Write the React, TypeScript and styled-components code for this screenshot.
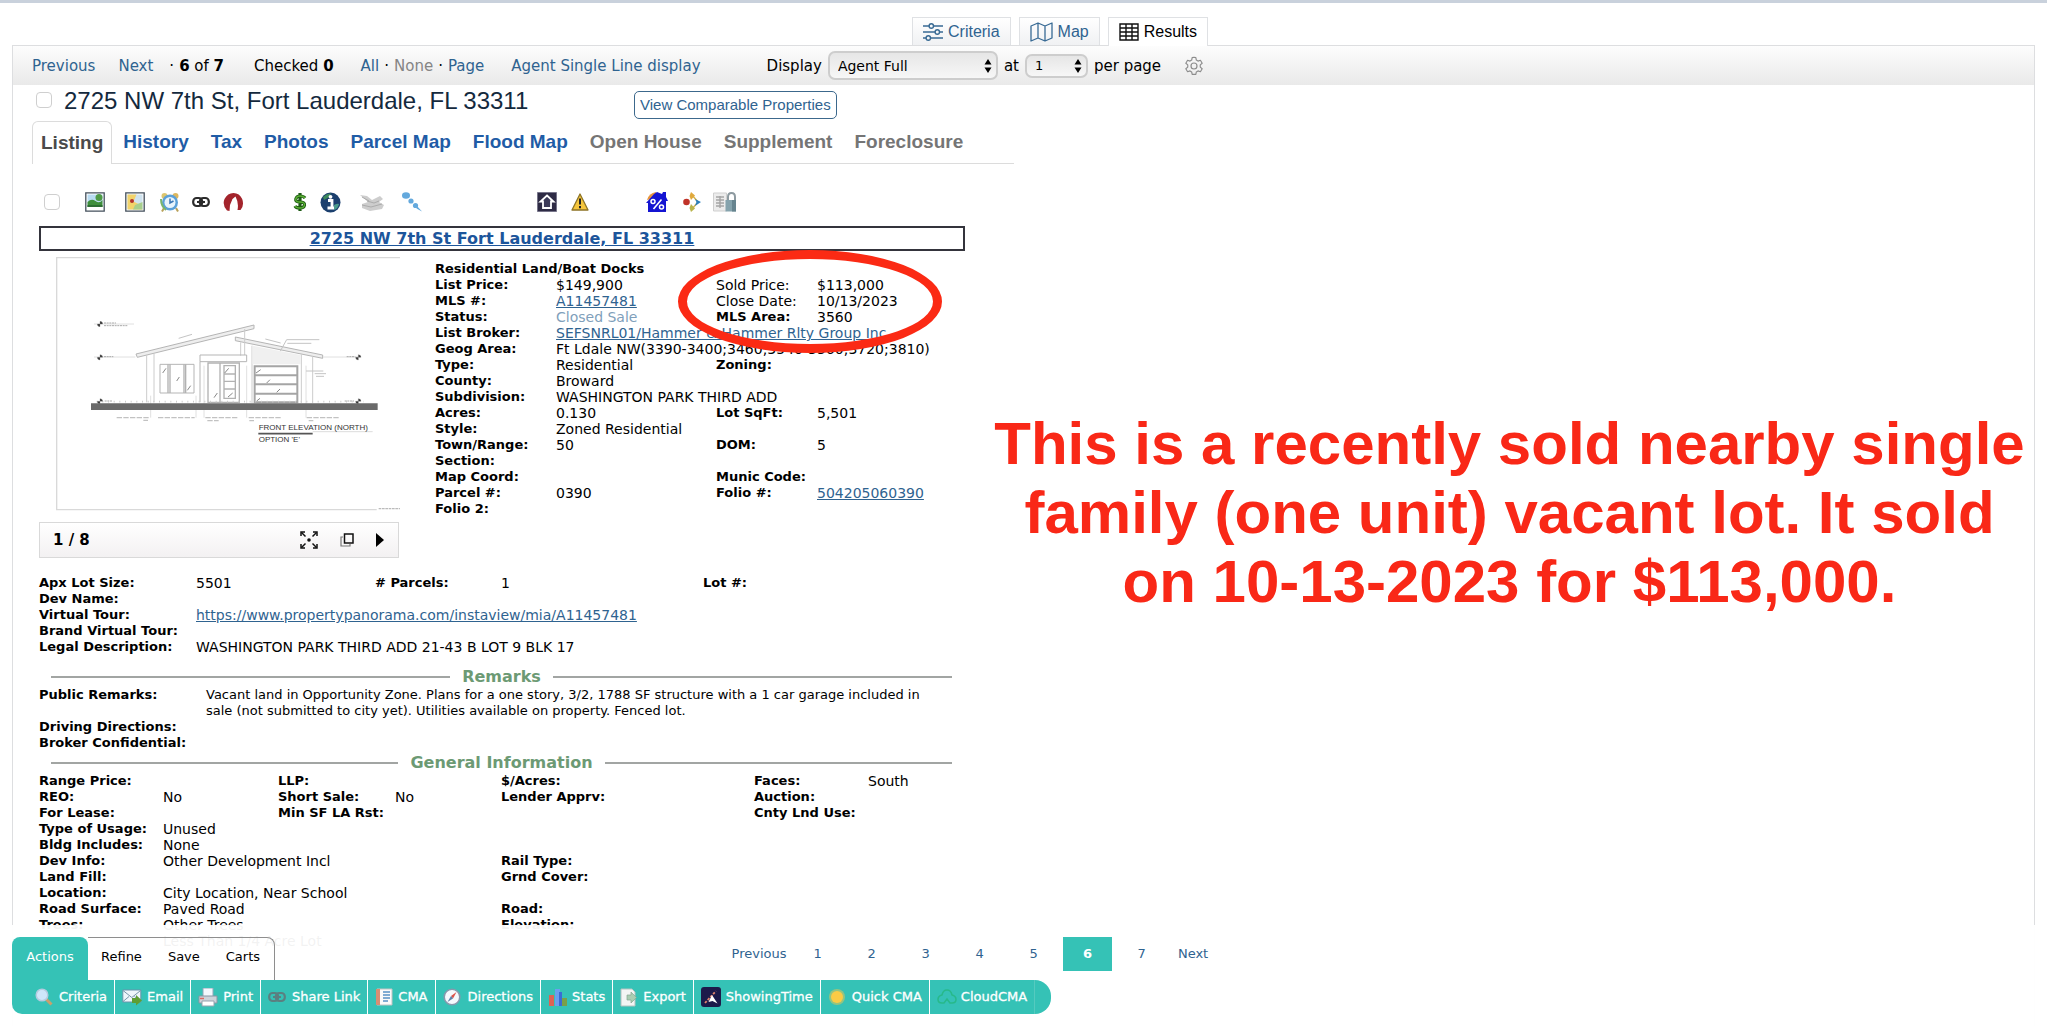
import React from "react";
import styled, { createGlobalStyle, css } from "styled-components";

const sans = `"DejaVu Sans", Verdana, sans-serif`;
const helv = `"Liberation Sans", Arial, Helvetica, sans-serif`;
const teal = "#35c2b6";
const link = "#2f6390";

const Global = createGlobalStyle`
  * { box-sizing: border-box; }
  body { margin: 0; background: #fff; color: #000; font: 13px/16px ${sans}; }
  button, select, input { font: inherit; color: inherit; }
  svg { display: block; flex: none; }
`;

const Page = styled.div`
  height: 100vh;
  overflow: hidden;
  position: relative;
  border-top: 3px solid #c9d1dc;
`;

const ViewTabs = styled.nav`
  height: 42px;
  padding: 14px 0 0 912px;
  display: flex;
  gap: 8px;
`;

const ViewTab = styled.a<{ $active?: boolean }>`
  display: flex;
  align-items: center;
  gap: 5px;
  height: 28px;
  padding: 0 10px;
  border: 1px solid #dfe1e4;
  border-bottom: 0;
  background: linear-gradient(#fff, #f0f1f3);
  color: ${link};
  font: 16px/20px ${helv};
  text-decoration: none;
  ${(p) =>
    p.$active &&
    css`
      height: 29px;
      position: relative;
      background: #fff;
      color: #000;
    `}
`;

const Panel = styled.main`
  margin: 0 12px;
  border: 1px solid #dddee0;
  min-height: 100%;
`;

const Toolbar = styled.div`
  height: 39px;
  padding: 0 19px;
  display: flex;
  align-items: center;
  background: linear-gradient(#fdfdfd, #e9e9e9);
  font-size: 15px;
  white-space: nowrap;
`;

const Group = styled.div<{ $gap?: number; $left?: number }>`
  display: flex;
  align-items: center;
  gap: ${(p) => p.$gap ?? 0}px;
  margin-left: ${(p) => p.$left ?? 0}px;
`;

const PlainLink = styled.a<{ $muted?: boolean }>`
  color: ${(p) => (p.$muted ? "#858585" : link)};
  text-decoration: none;
`;

const SelectBox = styled.div`
  position: relative;
  display: flex;
  align-items: center;
  svg {
    position: absolute;
    right: 6px;
    pointer-events: none;
  }
`;

const Select = styled.select<{ $width: number; $tall?: boolean }>`
  appearance: none;
  width: ${(p) => p.$width}px;
  height: ${(p) => (p.$tall ? 29 : 24)}px;
  padding: 0 8px;
  border: 2px solid #cdcdcd;
  border-radius: 7px;
  background: linear-gradient(#e6e6e6, #f7f7f7);
  font-size: ${(p) => (p.$tall ? 14 : 13)}px;
`;

const IconButton = styled.button`
  display: flex;
  padding: 0;
  border: 0;
  background: none;
`;

const TitleRow = styled.div`
  display: flex;
  align-items: flex-start;
  height: 36px;
  padding-left: 23px;
`;

const Check = styled.input`
  appearance: none;
  width: 16px;
  height: 16px;
  margin: 0;
  border: 1px solid #cfcfcf;
  border-radius: 4px;
  background: #fff;
  flex: none;
  ${TitleRow} & {
    margin-top: 7px;
  }
`;

const Title = styled.h1`
  margin: 0 0 0 12px;
  width: 570px;
  font: 24px/32px ${helv};
  color: #14293d;
`;

const OutlineButton = styled.button`
  height: 28px;
  margin-top: 6px;
  padding: 0 5px;
  border: 1px solid #3c688c;
  border-radius: 5px;
  background: #fff;
  color: ${link};
  font: 15px/20px ${helv};
`;

const RecordTabs = styled.nav`
  display: flex;
  width: 982px;
  height: 43px;
  margin-left: 19px;
  font: bold 19px/42px ${helv};
`;

const RecordTab = styled.a<{ $state?: "active" | "off" }>`
  padding: 0 11px;
  border-bottom: 1px solid #dcdcdc;
  color: ${(p) => (p.$state === "active" ? "#4a4a4a" : p.$state === "off" ? "#757575" : "#1f5ca6")};
  text-decoration: none;
  white-space: nowrap;
  ${(p) =>
    p.$state === "active" &&
    css`
      padding: 0 8px;
      border: 1px solid #dcdcdc;
      border-bottom: 0;
      border-radius: 6px 6px 0 0;
    `}
`;

const TabFill = styled.div`
  flex: 1;
  border-bottom: 1px solid #dcdcdc;
`;

const Columns = styled.div`
  display: flex;
`;

const Sheet = styled.article`
  width: 952px;
  flex: none;
  padding-left: 26px;
`;

const IconRow = styled.div`
  display: flex;
  align-items: center;
  height: 62px;
  padding: 14px 0 0 5px;
`;

const IconSlot = styled.span<{ $left: number }>`
  display: block;
  margin-left: ${(p) => p.$left}px;
`;

const AddressBox = styled.h2`
  margin: 0;
  height: 25px;
  border: 2px solid #34343c;
  text-align: center;
  font: bold 16px/21px ${sans};
  a {
    color: #1c559b;
  }
`;

const Overview = styled.section`
  display: flex;
  position: relative;
  gap: 36px;
  padding-top: 6px;
`;

const Media = styled.div`
  width: 360px;
  flex: none;
`;

const Picture = styled.div`
  padding-left: 17px;
  height: 265px;
`;

const MediaBar = styled.div`
  height: 36px;
  padding: 0 14px 0 13px;
  display: flex;
  align-items: center;
  gap: 22px;
  border: 1px solid #d9d9d9;
  background: linear-gradient(#fff, #f3f1f2);
  font-weight: bold;
  font-size: 15px;
`;

const Count = styled.span`
  flex: 1;
`;

const Details = styled.div`
  padding-top: 4px;
  flex: 1;
`;

const Category = styled.h3`
  margin: 0;
  font: bold 13px/16px ${sans};
`;

const Circle = styled.div`
  position: absolute;
  left: 639px;
  top: -1px;
  width: 264px;
  height: 103px;
  border: 9px solid #fb2a14;
  border-radius: 50%;
  pointer-events: none;
`;

const Table = styled.table`
  width: 100%;
  table-layout: fixed;
  border-collapse: collapse;
  th,
  td {
    padding: 0;
    height: 16px;
    text-align: left;
    vertical-align: top;
    white-space: nowrap;
  }
  td {
    font-size: 14px;
  }
  td[data-wrap] {
    padding-right: 20px;
    font-size: 13px;
    white-space: normal;
  }
  a {
    color: ${link};
  }
`;

const Light = styled.span`
  display: block;
  font-weight: normal;
  font-size: 14px;
`;

const Status = styled.span`
  color: #7f9fbb;
`;

const Block = styled.section<{ $top: number }>`
  padding-top: ${(p) => p.$top}px;
`;

const Rule = styled.h3`
  display: flex;
  align-items: center;
  gap: 12px;
  height: 20px;
  margin: 0 13px 0 12px;
  color: #6c9a74;
  font: bold 16px/20px ${sans};
  &::before,
  &::after {
    content: "";
    flex: 1;
    height: 2px;
    background: #a2a5a3;
  }
`;

const Note = styled.p`
  flex: 1;
  margin: 245px 0 0;
  padding: 0 8px 0 28px;
  color: #f92817;
  font: bold 60px/69px ${helv};
  text-align: center;
`;

const Footer = styled.footer`
  position: absolute;
  left: 0;
  right: 0;
  bottom: 0;
  height: 101px;
  padding: 12px 12px 0;
  background: rgba(255, 255, 255, 0.95);
`;

const FooterTop = styled.div`
  display: flex;
  height: 43px;
`;

const ActiveTab = styled.button`
  width: 76px;
  border: 0;
  padding: 0 0 4px;
  border-radius: 8px 8px 0 0;
  background: ${teal};
  color: #fff;
`;

const TabGroup = styled.div`
  display: flex;
  padding: 0 14px 4px 13px;
  gap: 26px;
  border-top: 1px solid #8e8e8e;
  border-right: 1px solid #8e8e8e;
  border-radius: 0 8px 0 0;
`;

const FlatTab = styled.button`
  padding: 0;
  border: 0;
  background: none;
`;

const Pager = styled.nav`
  display: flex;
  gap: 5px;
  height: 34px;
  margin-left: 455px;
  line-height: 34px;
  text-align: center;
  a {
    color: ${link};
    text-decoration: none;
  }
`;

const PageLink = styled.a<{ $current?: boolean }>`
  width: 49px;
  ${(p) =>
    p.$current &&
    css`
      && {
        background: ${teal};
        color: #fff;
        font-weight: bold;
      }
    `}
`;

const PagerEnd = styled.a<{ $width: number }>`
  width: ${(p) => p.$width}px;
`;

const ActionBar = styled.div`
  display: inline-flex;
  height: 34px;
  padding: 0 16px;
  border-radius: 0 16px 16px 10px;
  background: ${teal};
`;

const Action = styled.button<{ $gap?: number }>`
  display: flex;
  align-items: center;
  gap: ${(p) => p.$gap ?? 5}px;
  padding: 0 7px;
  border: 0;
  border-right: 1px solid #fff;
  background: none;
  color: #fff;
  white-space: nowrap;
  -webkit-text-stroke: 0.3px #fff;
  &:last-child {
    border-right-color: #55cabf;
  }
`;

/* ---------- icons ---------- */

const Svg = ({ w = 20, h = 20, vb, children }: { w?: number; h?: number; vb?: string; children: React.ReactNode }) => (
  <svg width={w} height={h} viewBox={vb ?? `0 0 ${w} ${h}`} fill="none" aria-hidden="true">
    {children}
  </svg>
);

const Sliders = () => (
  <Svg w={20} h={20}>
    <g stroke="#386a94" strokeWidth="1.4">
      <path d="M0 4h6M10.500 4H20M0 10h12M16.500 10H20M0 16h3M7.500 16H20" />
      <circle cx="8.300" cy="4" r="2.200" />
      <circle cx="14.300" cy="10" r="2.200" />
      <circle cx="5.300" cy="16" r="2.200" />
    </g>
  </Svg>
);
const MapIcon = () => (
  <Svg w={23} h={20}>
    <path d="M1 4l7-3 7 3 7-3v15l-7 3-7-3-7 3zM8 1v15M15 4v15" stroke="#386a94" strokeWidth="1.3" strokeLinejoin="round" />
  </Svg>
);
const GridIcon = () => (
  <Svg w={20} h={20}>
    <path d="M1 2h18v16H1zM1 6h18M1 10h18M1 14h18M7 2v16M13 2v16" stroke="#111" strokeWidth="1.4" />
  </Svg>
);
const Arrows = () => (
  <Svg w={8} h={14}>
    <path d="M4 0l3.500 5.500h-7zM4 14l3.500-5.500h-7z" fill="#000" />
  </Svg>
);
const Gear = () => (
  <Svg w={20} h={20} vb="0 0 24 24">
    <path
      d="M12 1.500l2.200.4.600 3 2 1.200 2.900-1 2.100 3.600-2.300 2v2.600l2.300 2-2.100 3.600-2.900-1-2 1.200-.6 3H9.800l-.6-3-2-1.200-2.900 1-2.100-3.600 2.300-2v-2.600l-2.300-2L4.300 5.100l2.900 1 2-1.200.6-3z"
      stroke="#8d8d8d"
      strokeWidth="1.400"
      strokeLinejoin="round"
    />
    <circle cx="12" cy="12" r="3.600" stroke="#8d8d8d" strokeWidth="1.400" />
  </Svg>
);
const PhotoTree = () => (
  <Svg>
    <path d="M.8.800h18.400v18.400H.8z" fill="#fff" stroke="#44505c" strokeWidth="1.300" />
    <path d="M2.500 2.500h15v10h-15z" fill="#b9dcf2" />
    <path d="M2.500 10q4-4 8-1t7-1v7h-15z" fill="#3f8f3c" />
    <circle cx="14" cy="5.500" r="3.500" fill="#4f9b45" />
    <path d="M2.500 13h15v2h-15z" fill="#2d6e33" />
  </Svg>
);
const PhotoMap = () => (
  <Svg>
    <path d="M.8.800h18.400v18.400H.8z" fill="#fff" stroke="#44505c" strokeWidth="1.300" />
    <path d="M2.500 2.500h15v15h-15z" fill="#cfe3ef" />
    <path d="M2.500 2.500h9l-3 7 6 3 3 5h-15z" fill="#f2d36b" />
    <path d="M10 13l7.500-3v7.500H8z" fill="#a8cf8d" />
    <circle cx="7" cy="9" r="2" fill="#b3312d" />
  </Svg>
);
const Alarm = () => (
  <Svg>
    <path d="M4 16l-2 3.500M16 16l2 3.500" stroke="#b9a15a" strokeWidth="2" />
    <circle cx="4.500" cy="4" r="3" fill="#dcc66f" />
    <circle cx="15.500" cy="4" r="3" fill="#dcb75f" />
    <circle cx="10" cy="10.500" r="8" fill="#5ba0d8" />
    <circle cx="10" cy="10.500" r="5.500" fill="#e8f4fc" />
    <path d="M10 6.500v4.500l3.500-2" stroke="#3a76b5" strokeWidth="1.500" />
    <path d="M1 7q0 7 5 11" stroke="#79b56c" strokeWidth="2" />
  </Svg>
);
const Chain = ({ c = "#2b2b2b" }: { c?: string }) => (
  <Svg w={18} h={12}>
    <rect x="1.200" y="2" width="9" height="8" rx="3.500" stroke={c} strokeWidth="2.200" />
    <rect x="7.800" y="2" width="9" height="8" rx="3.500" stroke={c} strokeWidth="2.200" />
    <path d="M5 6h8" stroke={c} strokeWidth="2" />
  </Svg>
);
const RedArch = () => (
  <Svg w={21} h={20}>
    <path d="M4 18.500Q-1 13 1.500 7 4.500 1 10.500 1t8.700 6q2.300 6.500-1.700 11h-3Q16 11 12.500 4.500L9.500 7 7 13l-.5 6z" fill="#a3242c" />
    <path d="M10.500 7L9 13" stroke="#fff" strokeWidth="1" />
  </Svg>
);
const Dollar = () => (
  <Svg w={14} h={20}>
    <path d="M12 6Q10.500 4 7 4T2.800 7t4.200 3 4.500 3T7 16 2 14M7 1v18" stroke="#1d5a14" strokeWidth="3.200" />
    <path d="M12 6Q10.500 4 7 4T2.800 7t4.200 3 4.500 3T7 16 2 14" stroke="#5bb034" strokeWidth="1.400" />
  </Svg>
);
const Info = () => (
  <Svg w={21} h={21}>
    <circle cx="10.500" cy="10.500" r="10" fill="#1b3f6e" />
    <path d="M3 5q4-4 8-3.500Q9 6 4 8z" fill="#3d8a5b" />
    <path d="M14 13q4-2 5-1-1 5-5 6z" fill="#4a9a8c" />
    <path d="M8 8.500h4v7M7.500 16h6.500" stroke="#fff" strokeWidth="2.800" />
    <circle cx="10.500" cy="4.800" r="1.900" fill="#fff" />
  </Svg>
);
const GrayPrinter = () => (
  <Svg w={25} h={20}>
    <path d="M1 3l7 1 5 4 8-4 3 3-4 3 5 3-2 4-12 2-8-3v-4l6-2z" fill="#cdcdcd" />
    <path d="M3 13l9 2 11-3M8 9l7 2 5-2M3 5l7 4" stroke="#ababab" strokeWidth="1" />
  </Svg>
);
const Drops = () => (
  <Svg>
    <g fill="#64a9dd">
      <ellipse cx="4" cy="3.500" rx="4" ry="3.200" />
      <circle cx="9" cy="9" r="2.600" />
      <circle cx="13.500" cy="13.500" r="2.600" />
      <path d="M15 14l5 5.500-5.500-3z" />
    </g>
  </Svg>
);
const HomeBadge = () => (
  <Svg>
    <path d="M.5.500h19v19H.5z" fill="#2e2b45" stroke="#77758a" />
    <path d="M10 3.500l6.500 6H14v6.500H6V9.500H3.500z" fill="#3c3a59" stroke="#fff" strokeWidth="1.800" />
  </Svg>
);
const Warning = () => (
  <Svg w={18} h={18}>
    <path d="M9 1l8 16H1z" fill="#f5c53c" stroke="#8d7326" strokeWidth="1.300" strokeLinejoin="round" />
    <path d="M9 5.500v6M9 13v2.300" stroke="#222" strokeWidth="2" />
  </Svg>
);
const PercentHouse = () => (
  <Svg w={22} h={20}>
    <path d="M1 8Q3 1 10 0v6z" fill="#e8953c" />
    <path d="M8 2l3-2 5 2 1-2h3v5l2 4h-2v11H2v-9H0z" fill="#1414d2" />
    <path d="M15.500 7.500L7.500 17" stroke="#fff" strokeWidth="1.600" />
    <circle cx="7" cy="9.500" r="2" stroke="#fff" strokeWidth="1.500" />
    <circle cx="15.500" cy="15" r="2" stroke="#fff" strokeWidth="1.500" />
  </Svg>
);
const FourDots = () => (
  <Svg w={18} h={20}>
    <path d="M9 3l6 7-6 7" stroke="#d9b44a" strokeWidth="1.500" />
    <path d="M8 0l4 3.500L8 8 6.500 4z" fill="#e0a93c" />
    <circle cx="3.500" cy="10" r="3.300" fill="#c03328" />
    <path d="M12 7l6 3-6 4 1.500-4z" fill="#2b7fbd" />
    <path d="M8 12l4 4.500L8 20l-1.500-4z" fill="#b9b44c" />
  </Svg>
);
const DocLock = () => (
  <Svg w={24} h={20}>
    <path d="M.5 1h13v18H.5z" fill="#ececec" stroke="#cfcfcf" />
    <path d="M3 5h8M3 8h8M3 11h8M3 14h8M7 4v12" stroke="#a5a5a5" strokeWidth="1.400" />
    <path d="M15 8V5q0-4 3.500-4T22 5v3" stroke="#8d9aa0" strokeWidth="2" />
    <path d="M12.500 8H23v11.500H12.500z" fill="#85a3ad" />
    <path d="M19 8h4v11.500h-4z" fill="#66848f" />
  </Svg>
);
const Expand = () => (
  <Svg w={18} h={18}>
    <path d="M1 5V1h4M13 1h4v4M17 13v4h-4M5 17H1v-4" stroke="#111" strokeWidth="1.500" />
    <path d="M1.500 1.500l4 4M16.500 1.500l-4 4M16.500 16.500l-4-4M1.500 16.500l4-4" stroke="#111" strokeWidth="1.500" />
    <circle cx="9" cy="9" r="1.800" fill="#111" />
  </Svg>
);
const Windows = () => (
  <Svg w={14} h={14}>
    <path d="M4.500 1h8.500v9H4.500z" stroke="#111" strokeWidth="1.500" />
    <path d="M3 4H1v9h9v-2" stroke="#777" strokeWidth="1.200" />
  </Svg>
);
const Play = () => (
  <Svg w={8} h={14}>
    <path d="M0 0l8 7-8 7z" fill="#000" />
  </Svg>
);

const Lens = () => (
  <Svg w={18} h={18}>
    <path d="M10.500 10.500l6 6" stroke="#c9a06c" strokeWidth="3" />
    <circle cx="7" cy="7" r="5.800" fill="#cfe6fa" stroke="#b5cbe0" strokeWidth="1.500" />
  </Svg>
);
const Mail = () => (
  <Svg w={20} h={18}>
    <path d="M.8 2h18v12H.8z" fill="#eef5fa" stroke="#6a93ac" />
    <path d="M1 2.500l8.800 7 8.800-7M1 13.500l6-5M18.500 13.500l-6-5" stroke="#7896aa" />
    <path d="M10 10h4V7l6 5.500-6 5V15h-4z" fill="#5e9e33" />
  </Svg>
);
const Printer = () => (
  <Svg w={20} h={19}>
    <path d="M5 0h10v9H5z" fill="#f3f8fd" stroke="#91a7ba" />
    <path d="M1 8h18v7H1z" fill="#cdd3da" stroke="#8896a3" />
    <path d="M4 13h12v5H4z" fill="#fff" stroke="#96a3b0" />
    <path d="M2 10.500h4" stroke="#dc6a63" strokeWidth="1.500" />
  </Svg>
);
const Report = () => (
  <Svg w={18} h={18}>
    <path d="M2 1h15v16H2z" fill="#fafafa" stroke="#c2c2c2" />
    <path d="M1 1h4v16H1z" fill="#d98e73" />
    <path d="M8 4h7M8 7h7M8 10h7M8 13h5" stroke="#5a92c6" strokeWidth="1.500" />
  </Svg>
);
const Compass = () => (
  <Svg w={18} h={18}>
    <circle cx="9" cy="9" r="7.800" fill="#f5f9fd" stroke="#8599ad" strokeWidth="1.600" />
    <path d="M13.500 4L10 10.500 8 8z" fill="#dc5148" />
    <path d="M4.500 14L8 8l2 2.500z" fill="#5a82aa" />
  </Svg>
);
const Bars = () => (
  <Svg w={19} h={18}>
    <path d="M1 7h5v11H1z" fill="#dc6355" />
    <path d="M7 1h5v17H7z" fill="#6a9ff0" />
    <path d="M11 4h3v14h-3z" fill="#3a6cd4" />
    <path d="M14 10h5v8h-5z" fill="#7aa048" />
  </Svg>
);
const ExportIcon = () => (
  <Svg w={17} h={19}>
    <path d="M1 1h11l3 3v14H1z" fill="#f3f5f4" stroke="#b6c2c0" />
    <path d="M7 7h4V4l5.500 5.500L11 15v-3H7z" fill="#aacdb2" stroke="#86a890" strokeWidth=".7" />
  </Svg>
);
const ShowIcon = () => (
  <Svg>
    <rect width="20" height="20" rx="3" fill="#1c1a4a" />
    <path d="M4 16L15 4" stroke="#e0826d" strokeWidth="1.800" strokeDasharray="2.500 1.500" />
    <path d="M11 8l5.500 8.500-5-2.500-4 1z" fill="#fff" />
  </Svg>
);
const Sun = () => (
  <Svg w={18} h={18}>
    <circle cx="9" cy="9" r="8" fill="#d6c45c" opacity=".6" />
    <circle cx="9" cy="9" r="6" fill="#fbcb45" />
  </Svg>
);
const Cloud = () => (
  <Svg w={20} h={18}>
    <path d="M7 15H5Q1 15 1 11.500T5 7Q6 2 10 2t5 5q4 1 4 4.500T15 15h-2l-3-4-3 4z" stroke="#27b98a" strokeWidth="1.500" />
  </Svg>
);

/* Front elevation drawing shown as the listing photo */
const Elevation = () => (
  <svg width="344" height="254" viewBox="168 24 1032 762" fill="none" role="img" aria-label="Front elevation">
    <path d="M1200 26H170V782H1130" stroke="#d9d9d9" strokeWidth="4" />
    <path d="M1136 779h64" stroke="#bbb" strokeWidth="4" strokeDasharray="8 2" />
    <g stroke="#b5b5b5" strokeWidth="3">
      <path d="M408 315L762 228v11L412 325zM706 264l262 54v10L706 275z" fill="#eee" />
      <path d="M440 318v142M462 314v146M734 240v78M756 290v172M904 316v146M938 322v140M722 280v40" stroke="#ccc" />
      <path d="M600 318h140v20H600zM600 338v122M480 346h102v86H480z" />
      <path d="M504 346v86M510 346v86M552 346v86M557 346v86M624 342h94v118h-94zM660 342v118M672 350h34v98h-34zM672 375h34M672 397h34M672 420h34" stroke="#b2b2b2" strokeWidth="4" />
      <path d="M764 352h128v108H764zM764 379h128M764 406h128M764 434h128" stroke="#a5a5a5" strokeWidth="6" />
      <path d="M488 372l10-14M530 396l8-12M562 424l10-14M642 446l10-14M674 372l12-14M684 444l14-12M768 372l14-10M800 402l10-10M830 430l10-10M770 456l10-8" stroke="#888" />
      <path d="M536 268l40-12M796 270l46 12M830 326l30-54M860 272h98M862 283h72M918 366h52M944 374h34M948 382h24" stroke="#c4c4c4" />
      <path d="M282 225h120M282 324h124M970 324h110M452 440v66M588 440v66M612 350v156M740 350v156M918 350v156" stroke="#d0d0d0" strokeWidth="2" />
      <path d="M312 222h36M312 230h72M312 323h28M1040 323h26M314 456h24M1034 456h28" stroke="#aaa" strokeDasharray="6 2" />
      <path d="M350 506h98M474 506h110M616 506h98M746 506h98M920 506h100M430 514h14M622 515h34M748 515h14M926 515h14" stroke="#c2c2c2" strokeDasharray="16 4" strokeWidth="4" />
      <path d="M290 458h800" stroke="#ccc" strokeDasharray="3 14" strokeWidth="5" />
    </g>
    <path d="M757 290L902 318V346H757z" fill="#f0f0f0" />
    <g fill="#333">
      {[[300, 225], [300, 325], [300, 457], [1075, 325], [1075, 457]].map(([x, y]) => (
        <path key={`${x}-${y}`} d={`M${x} ${y}v-8a8 8 0 0 1 8 8zM${x} ${y}v8a8 8 0 0 1-8-8z`} stroke="#888" />
      ))}
    </g>
    <path d="M273 463h860v20H273z" fill="#6a6a6a" />
    <path d="M775 554h163" stroke="#555" strokeWidth="5" />
    <path d="M938 548h180" stroke="#ccc" strokeWidth="2" />
    <g fill="#333" fontFamily="Liberation Sans, Arial, sans-serif" fontSize="24">
      <text x="776" y="543">FRONT ELEVATION (NORTH)</text>
      <text x="776" y="580">OPTION 'E'</text>
    </g>
  </svg>
);

/* ---------- data ---------- */

type Cell = { label?: React.ReactNode; value?: React.ReactNode; span?: number; wrap?: boolean };
const f = (label: React.ReactNode, value?: React.ReactNode, span?: number, wrap?: boolean): Cell => ({ label, value, span, wrap });

const FieldTable = ({ columns, rows }: { columns: (number | undefined)[]; rows: Cell[][] }) => (
  <Table>
    <colgroup>
      {columns.map((w, i) => (
        <col key={i} width={w} />
      ))}
    </colgroup>
    <tbody>
      {rows.map((row, r) => (
        <tr key={r}>
          {row.map((cell, c) => (
            <React.Fragment key={c}>
              <th scope="row">{cell.label}</th>
              <td colSpan={cell.span} data-wrap={cell.wrap || undefined}>
                {cell.value}
              </td>
            </React.Fragment>
          ))}
        </tr>
      ))}
    </tbody>
  </Table>
);

const detailRows: Cell[][] = [
  [f("List Price:", "$149,900"), f(<Light>Sold Price:</Light>, "$113,000")],
  [f("MLS #:", <a href="#mls">A11457481</a>), f(<Light>Close Date:</Light>, "10/13/2023")],
  [f("Status:", <Status>Closed Sale</Status>), f("MLS Area:", "3560")],
  [f("List Broker:", <a href="#broker">SEFSNRL01/Hammer & Hammer Rlty Group Inc</a>, 3)],
  [f("Geog Area:", "Ft Ldale NW(3390-3400;3460;3540-3560;3720;3810)", 3)],
  [f("Type:", "Residential"), f("Zoning:")],
  [f("County:", "Broward", 3)],
  [f("Subdivision:", "WASHINGTON PARK THIRD ADD", 3)],
  [f("Acres:", "0.130"), f("Lot SqFt:", "5,501")],
  [f("Style:", "Zoned Residential", 3)],
  [f("Town/Range:", "50"), f("DOM:", "5")],
  [f("Section:", undefined, 3)],
  [f("Map Coord:"), f("Munic Code:")],
  [f("Parcel #:", "0390"), f("Folio #:", <a href="#folio">504205060390</a>)],
  [f("Folio 2:", undefined, 3)],
];

const lotRows: Cell[][] = [
  [f("Apx Lot Size:", "5501"), f("# Parcels:", "1"), f("Lot #:")],
  [f("Dev Name:", undefined, 5)],
  [f("Virtual Tour:", <a href="#tour">https://www.propertypanorama.com/instaview/mia/A11457481</a>, 5)],
  [f("Brand Virtual Tour:", undefined, 5)],
  [f("Legal Description:", "WASHINGTON PARK THIRD ADD 21-43 B LOT 9 BLK 17", 5)],
];

const remarkRows: Cell[][] = [
  [
    f(
      "Public Remarks:",
      "Vacant land in Opportunity Zone. Plans for a one story, 3/2, 1788 SF structure with a 1 car garage included in sale (not submitted to city yet). Utilities available on property. Fenced lot.",
      1,
      true
    ),
  ],
  [f("Driving Directions:")],
  [f("Broker Confidential:")],
];

const generalRows: Cell[][] = [
  [f("Range Price:"), f("LLP:"), f("$/Acres:"), f("Faces:", "South")],
  [f("REO:", "No"), f("Short Sale:", "No"), f("Lender Apprv:"), f("Auction:")],
  [f("For Lease:"), f("Min SF LA Rst:"), f(""), f("Cnty Lnd Use:")],
  [f("Type of Usage:", "Unused", 7)],
  [f("Bldg Includes:", "None", 7)],
  [f("Dev Info:", "Other Development Incl", 3), f("Rail Type:", undefined, 3)],
  [f("Land Fill:", undefined, 3), f("Grnd Cover:", undefined, 3)],
  [f("Location:", "City Location, Near School", 7)],
  [f("Road Surface:", "Paved Road", 3), f("Road:", undefined, 3)],
  [f("Trees:", "Other Trees", 3), f("Elevation:", undefined, 3)],
  [f("", "Less Than 1/4 Acre Lot", 7)],
];

const actions: [React.ReactNode, string, number?][] = [
  [<Lens />, "Criteria", 6],
  [<Mail />, "Email"],
  [<Printer />, "Print"],
  [<Chain c="#5b7f80" />, "Share Link", 6],
  [<Report />, "CMA"],
  [<Compass />, "Directions", 7],
  [<Bars />, "Stats"],
  [<ExportIcon />, "Export", 6],
  [<ShowIcon />, "ShowingTime"],
  [<Sun />, "Quick CMA", 6],
  [<Cloud />, "CloudCMA", 4],
];

const tools: [number, React.ReactNode][] = [
  [25, <PhotoTree />],
  [20, <PhotoMap />],
  [15, <Alarm />],
  [12, <Chain />],
  [13, <RedArch />],
  [49, <Dollar />],
  [13, <Info />],
  [18, <GrayPrinter />],
  [18, <Drops />],
  [115, <HomeBadge />],
  [14, <Warning />],
  [57, <PercentHouse />],
  [15, <FourDots />],
  [12, <DocLock />],
];

const recordTabs: [string, ("active" | "off")?][] = [
  ["Listing", "active"],
  ["History"],
  ["Tax"],
  ["Photos"],
  ["Parcel Map"],
  ["Flood Map"],
  ["Open House", "off"],
  ["Supplement", "off"],
  ["Foreclosure", "off"],
];

export default function App() {
  return (
    <Page>
      <Global />
      <ViewTabs>
        <ViewTab href="#criteria">
          <Sliders /> Criteria
        </ViewTab>
        <ViewTab href="#map">
          <MapIcon /> Map
        </ViewTab>
        <ViewTab href="#results" $active>
          <GridIcon /> Results
        </ViewTab>
      </ViewTabs>

      <Panel>
        <Toolbar>
          <Group $gap={23}>
            <PlainLink href="#prev">Previous</PlainLink>
            <PlainLink href="#next">Next</PlainLink>
          </Group>
          <Group $left={16} $gap={5}>
            <span>·</span>
            <span>
              <b>6</b> of <b>7</b>
            </span>
          </Group>
          <Group $left={30}>
            <span>
              Checked <b>0</b>
            </span>
          </Group>
          <Group $left={27} $gap={5}>
            <PlainLink href="#all">All</PlainLink>·
            <PlainLink href="#none" $muted>
              None
            </PlainLink>
            ·<PlainLink href="#page">Page</PlainLink>
          </Group>
          <Group $left={27}>
            <PlainLink href="#single">Agent Single Line display</PlainLink>
          </Group>
          <Group $left={66} $gap={6}>
            <label htmlFor="display">Display</label>
            <SelectBox>
              <Select id="display" $width={170} $tall defaultValue="Agent Full">
                <option>Agent Full</option>
              </Select>
              <Arrows />
            </SelectBox>
            <label htmlFor="per">at</label>
            <SelectBox>
              <Select id="per" $width={63} defaultValue="1">
                <option>1</option>
              </Select>
              <Arrows />
            </SelectBox>
            <span>per page</span>
          </Group>
          <Group $left={23}>
            <IconButton aria-label="Settings">
              <Gear />
            </IconButton>
          </Group>
        </Toolbar>

        <TitleRow>
          <Check type="checkbox" aria-label="Select listing" />
          <Title>2725 NW 7th St, Fort Lauderdale, FL 33311</Title>
          <OutlineButton>View Comparable Properties</OutlineButton>
        </TitleRow>

        <RecordTabs>
          {recordTabs.map(([name, state]) => (
            <RecordTab key={name} href="#tab" $state={state}>
              {name}
            </RecordTab>
          ))}
          <TabFill />
        </RecordTabs>

        <Columns>
          <Sheet>
            <IconRow>
              <Check type="checkbox" aria-label="Select record" />
              {tools.map(([left, icon], i) => (
                <IconSlot key={i} $left={left}>
                  {icon}
                </IconSlot>
              ))}
            </IconRow>

            <AddressBox>
              <a href="#address">2725 NW 7th St Fort Lauderdale, FL 33311</a>
            </AddressBox>

            <Overview>
              <Media>
                <Picture>
                  <Elevation />
                </Picture>
                <MediaBar>
                  <Count>1 / 8</Count>
                  <IconButton aria-label="Full screen">
                    <Expand />
                  </IconButton>
                  <IconButton aria-label="New window">
                    <Windows />
                  </IconButton>
                  <IconButton aria-label="Next photo">
                    <Play />
                  </IconButton>
                </MediaBar>
              </Media>
              <Details>
                <Category>Residential Land/Boat Docks</Category>
                <FieldTable columns={[121, 160, 101, undefined]} rows={detailRows} />
              </Details>
              <Circle />
            </Overview>

            <Block $top={17}>
              <FieldTable columns={[157, 179, 126, 202, 80, undefined]} rows={lotRows} />
            </Block>

            <Block $top={12}>
              <Rule>Remarks</Rule>
              <FieldTable columns={[167, undefined]} rows={remarkRows} />
            </Block>

            <Block $top={2}>
              <Rule>General Information</Rule>
              <FieldTable columns={[124, 115, 117, 106, 120, 133, 114, undefined]} rows={generalRows} />
            </Block>
          </Sheet>
          <Note>This is a recently sold nearby single family (one unit) vacant lot. It sold on 10-13-2023 for $113,000.</Note>
        </Columns>
      </Panel>

      <Footer>
        <FooterTop>
          <ActiveTab>Actions</ActiveTab>
          <TabGroup>
            <FlatTab>Refine</FlatTab>
            <FlatTab>Save</FlatTab>
            <FlatTab>Carts</FlatTab>
          </TabGroup>
          <Pager>
            <PagerEnd href="#prev" $width={58}>
              Previous
            </PagerEnd>
            {[1, 2, 3, 4, 5, 6, 7].map((n) => (
              <PageLink key={n} href="#page" $current={n === 6}>
                {n}
              </PageLink>
            ))}
            <PagerEnd href="#next" $width={44}>
              Next
            </PagerEnd>
          </Pager>
        </FooterTop>
        <ActionBar>
          {actions.map(([icon, label, gap]) => (
            <Action key={label} $gap={gap}>
              {icon}
              {label}
            </Action>
          ))}
        </ActionBar>
      </Footer>
    </Page>
  );
}
